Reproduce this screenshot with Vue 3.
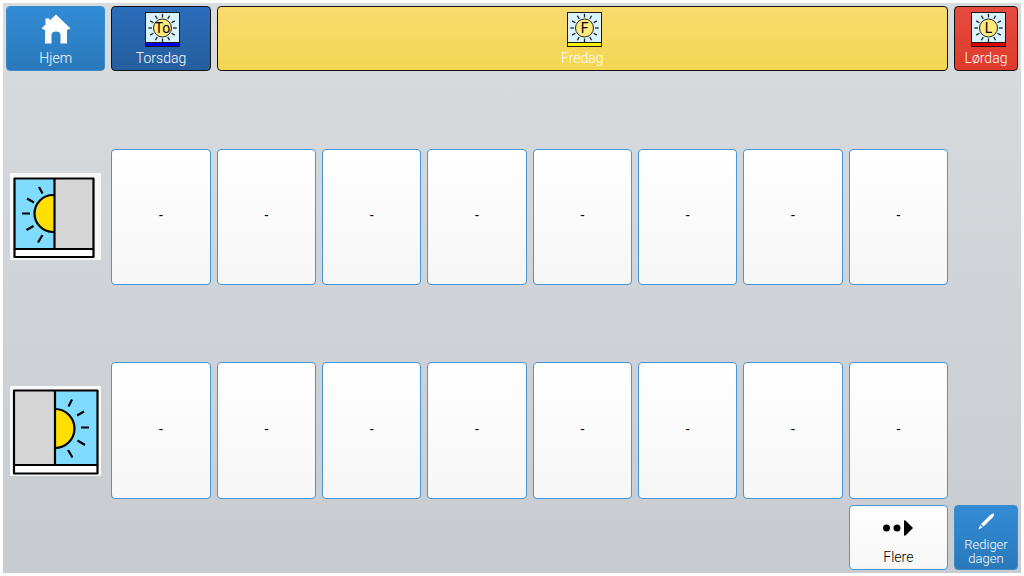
<script setup>
const days = [
  { name: 'Torsdag', short: 'To', kind: 'thursday', bar: '#0000e6' },
  { name: 'Fredag', short: 'F', kind: 'friday', bar: '#fff200' },
  { name: 'Lørdag', short: 'L', kind: 'saturday', bar: '#e00000' }
]
const rays = Array.from({ length: 12 }, (_, i) => i * 30)
const slots = Array.from({ length: 8 }, (_, i) => i + 1)
</script>

<template>
  <main class="board">
    <button class="tile blue home" type="button">
      <svg class="icon-house" viewBox="0 0 30 30" aria-hidden="true">
        <path d="M15 0.5 L29.5 14.5 L26 16 V29.5 H19.5 V21 Q19.5 17.5 15 17.5 Q10.5 17.5 10.5 21 V29.5 H4 V16 L0.5 14.5 L4.5 10.5 V4.5 H8.5 V6.8 Z" fill="#fff" />
      </svg>
      <span>Hjem</span>
    </button>

    <button v-for="day in days" :key="day.kind" class="tile day" :class="day.kind" type="button">
      <svg class="icon-day" viewBox="0 0 36 36" aria-hidden="true">
        <rect x="0.5" y="0.5" width="34" height="34" fill="#d9f4ff" stroke="#1a1a1a" />
        <rect x="1" y="31" width="33" height="3" :fill="day.bar" />
        <path d="M1 30.5 H34" stroke="#1a1a1a" />
        <path
          v-for="angle in rays"
          :key="angle"
          d="M17.5 1.8 V5.5"
          :transform="`rotate(${angle} 17.5 16)`"
          stroke="#222"
          stroke-width="1.3"
        />
        <circle cx="17.5" cy="16" r="9" fill="#ffe97a" stroke="#222" />
        <text class="letter" x="17.5" y="21" text-anchor="middle">{{ day.short }}</text>
      </svg>
      <span>{{ day.name }}</span>
    </button>

    <div class="period morning">
      <svg viewBox="0 0 91 87" role="img" aria-label="Formiddag">
        <rect width="91" height="87" fill="#f8f8f9" />
        <rect x="5" y="5" width="40" height="71" fill="#80dcff" />
        <rect x="45" y="5" width="38" height="71" fill="#d6d6d6" />
        <rect x="5" y="76" width="78" height="8" fill="#fff" />
        <path d="M44.5 22 A18.5 18.5 0 0 0 44.5 59 Z" fill="#ffdf00" />
        <g fill="none" stroke="#000" stroke-width="2.2" stroke-linejoin="round">
          <path d="M44.5 22 H43 A18.5 18.5 0 0 0 43 59 H44.5" />
          <path d="M4.5 5.5 H83.5 V84 H4.5 Z M4.5 76 H83.5 M44.5 5.5 V76" />
          <path d="M29 14 L32.5 20.5 M17 25.5 L24 29.5 M12 40.5 H20 M16.5 57 L23.5 53 M28 69.5 L32.5 62" />
        </g>
      </svg>
    </div>
    <button v-for="n in slots" :key="`am${n}`" class="tile slot am" type="button">-</button>

    <div class="period afternoon">
      <svg viewBox="0 0 91 90" role="img" aria-label="Eftermiddag">
        <rect width="91" height="90" fill="#f8f8f9" />
        <rect x="5" y="5" width="40" height="74" fill="#d6d6d6" />
        <rect x="45" y="5" width="42" height="74" fill="#80dcff" />
        <rect x="5" y="79" width="82" height="8" fill="#fff" />
        <path d="M45 23 A19.5 19.5 0 0 1 45 62 Z" fill="#ffdf00" />
        <g fill="none" stroke="#000" stroke-width="2.2" stroke-linejoin="round">
          <path d="M45 23 A19.5 19.5 0 0 1 45 62" />
          <path d="M4 4.5 H87.5 V87.5 H4 Z M4 79 H87.5 M45 4.5 V79" />
          <path d="M62 13.5 L58.5 20.5 M74 25.5 L67 29.5 M71 41.5 H79 M67.5 54.5 L75 59 M58 64 L62.5 71.5" />
        </g>
      </svg>
    </div>
    <button v-for="n in slots" :key="`pm${n}`" class="tile slot pm" type="button">-</button>

    <button class="tile more" type="button">
      <svg class="icon-more" viewBox="0 0 30 16" aria-hidden="true">
        <circle cx="3.5" cy="8" r="3.5" />
        <circle cx="14" cy="8" r="3.5" />
        <path d="M21 1 Q21 0 22.5 0.5 L30 8 L22.5 15.5 Q21 16 21 15 Z" />
      </svg>
      <span>Flere</span>
    </button>

    <button class="tile blue edit" type="button">
      <svg class="icon-pen" viewBox="0 0 17 17" aria-hidden="true">
        <path d="M0.5 16.5 L2.2 12 L4.5 14.5 Z M3 11 L12.8 1.5 Q15 0 16 0.6 Q16.8 1.8 15.2 4 L5.5 13.5 Z" fill="#fff" />
      </svg>
      <span>Rediger dagen</span>
    </button>
  </main>
</template>

<style>
body {
  background: #fff;
}
</style>

<style scoped>
.board {
  box-sizing: border-box;
  min-height: 100vh;
  display: grid;
  grid-template-columns: repeat(9, minmax(0, 1fr)) 64px;
  grid-template-rows: repeat(8, minmax(65px, 1fr));
  gap: 6px;
  padding: 3px;
  border: 3px solid #fff;
  background: linear-gradient(#d8dcdf, #c8cbd0) padding-box;
  font-family: Roboto, "Liberation Sans", sans-serif;
}

.tile {
  box-sizing: border-box;
  min-width: 0;
  margin: 0;
  padding: 0 0 4px;
  display: flex;
  flex-direction: column;
  align-items: center;
  justify-content: flex-end;
  border: 1px solid #4696d8;
  border-radius: 4px;
  font-family: inherit;
  font-size: 14px;
  font-weight: 300;
  line-height: 16px;
  color: #fff;
}

.blue {
  border-color: #3a8ccb;
  background: linear-gradient(#328cd5, #2a78ba);
}

.home,
.day {
  grid-row: 1;
}

.home,
.period {
  grid-column: 1;
}

.icon-house {
  width: 30px;
  height: 30px;
  margin-bottom: 6px;
}

.day {
  border-color: #111;
}

.icon-day {
  flex: none;
  width: 36px;
  height: 36px;
  margin: 0 0 2px 5px;
}

.letter {
  font-size: 14px;
  font-weight: 400;
  fill: #000;
}

.thursday {
  grid-column: 2;
  background: linear-gradient(#2a6dba, #265e9e);
}

.friday {
  grid-column: 3 / 10;
  background: linear-gradient(#f9db70, #f4d654);
}

.saturday {
  grid-column: 10;
  background: linear-gradient(#e54b40, #df3a2b);
}

.period {
  display: flex;
  align-items: center;
  justify-content: center;
}

.period svg {
  width: 91px;
}

.slot,
.more {
  background: linear-gradient(#fff, #f6f6f6);
  color: #000;
}

.slot {
  justify-content: center;
  font-weight: 400;
}

.morning,
.am {
  grid-row: 3 / 5;
}

.afternoon,
.pm {
  grid-row: 6 / 8;
}

.more {
  grid-column: 9;
  grid-row: 8;
}

.icon-more {
  width: 30px;
  height: 16px;
  margin-bottom: 13px;
}

.edit {
  grid-column: 10;
  grid-row: 8;
  padding-bottom: 3px;
  font-size: 13px;
  line-height: 14px;
}

.icon-pen {
  width: 17px;
  height: 17px;
  margin-bottom: 8px;
}
</style>
